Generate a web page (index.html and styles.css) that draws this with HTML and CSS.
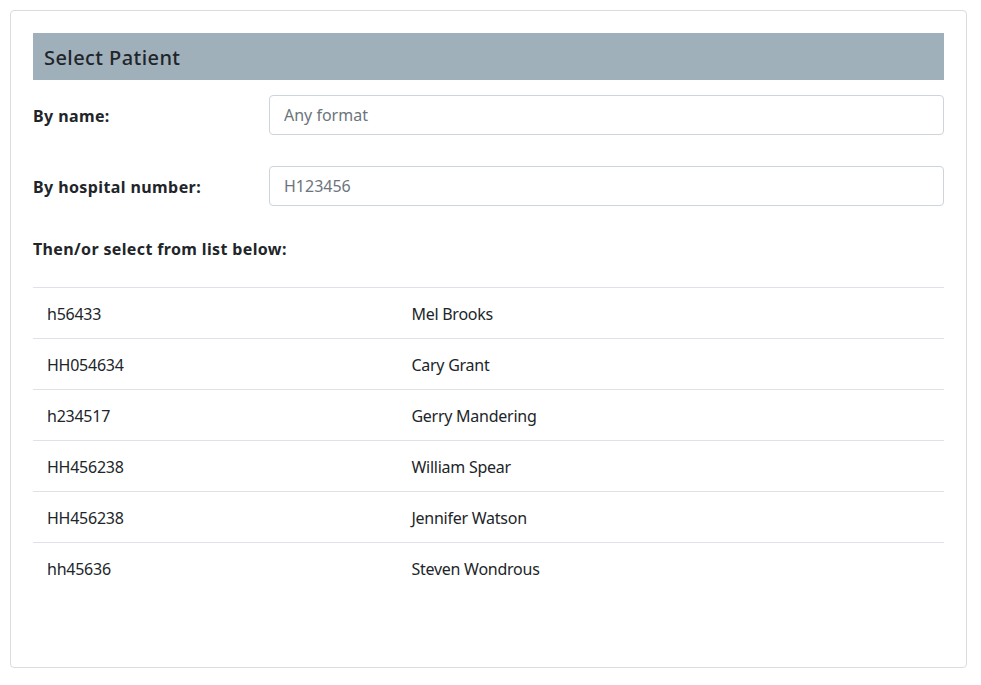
FILE: index.html
```html
<!DOCTYPE html>
<html>
<head>
<meta charset="utf-8">
<link rel="stylesheet" href="styles.css">
</head>
<body>
<div class="card">
  <div class="card-head">Select Patient</div>
  <div class="form-row first">
    <label class="lbl">By name:</label>
    <div class="field"><input class="input" type="text" placeholder="Any format"></div>
  </div>
  <div class="form-row">
    <label class="lbl">By hospital number:</label>
    <div class="field"><input class="input" type="text" placeholder="H123456"></div>
  </div>
  <div class="list-label">Then/or select from list below:</div>
  <table class="patients">
    <tbody>
      <tr><td class="c-id">h56433</td><td>Mel Brooks</td></tr>
      <tr><td class="c-id">HH054634</td><td>Cary Grant</td></tr>
      <tr><td class="c-id">h234517</td><td>Gerry Mandering</td></tr>
      <tr><td class="c-id">HH456238</td><td>William Spear</td></tr>
      <tr><td class="c-id">HH456238</td><td>Jennifer Watson</td></tr>
      <tr><td class="c-id">hh45636</td><td>Steven Wondrous</td></tr>
    </tbody>
  </table>
</div>
</body>
</html>
```

FILE: styles.css
```css
* { box-sizing: border-box; }
html, body { margin: 0; padding: 0; background: #fff; }
body {
  font-family: "Noto Sans", "Open Sans", sans-serif;
  font-size: 16px;
  line-height: 24px;
  color: #212529;
}
.card {
  margin: 10px 0 0 10px;
  width: 957px;
  height: 658px;
  border: 1px solid #dcdcdc;
  border-radius: 4px;
  padding: 22px 22px 0 22px;
}
.card-head {
  height: 47px;
  background: #9fb0bb;
  padding: 2px 11px 0 11px;
  font-size: 20px;
  font-weight: 500;
  line-height: 45px;
  letter-spacing: 0.43px;
  color: #212529;
}
.form-row {
  display: flex;
  align-items: center;
  margin-top: 31px;
}
.form-row.first { margin-top: 15px; }
.lbl {
  width: 236px;
  flex: none;
  font-weight: 700;
  letter-spacing: 0.4px;
  padding-top: 2px;
}
.field { flex: 1; }
.input {
  display: block;
  width: 100%;
  height: 40px;
  border: 1px solid #ced4da;
  border-radius: 4px;
  padding: 6px 14px;
  font-family: inherit;
  font-size: 16px;
  color: #495057;
  background: #fff;
  outline: none;
}
.input::placeholder { color: #6c757d; opacity: 1; }
.list-label {
  margin-top: 30px;
  padding-top: 1px;
  font-weight: 700;
  letter-spacing: 0.36px;
}
.patients {
  margin-top: 26px;
  width: 100%;
  border-collapse: collapse;
}
.patients td {
  border-top: 1px solid #dee2e6;
  padding: 14px 14px 12px 14px;
  line-height: 24px;
  letter-spacing: -0.25px;
  vertical-align: top;
}
.patients .c-id { width: 40%; }
```
